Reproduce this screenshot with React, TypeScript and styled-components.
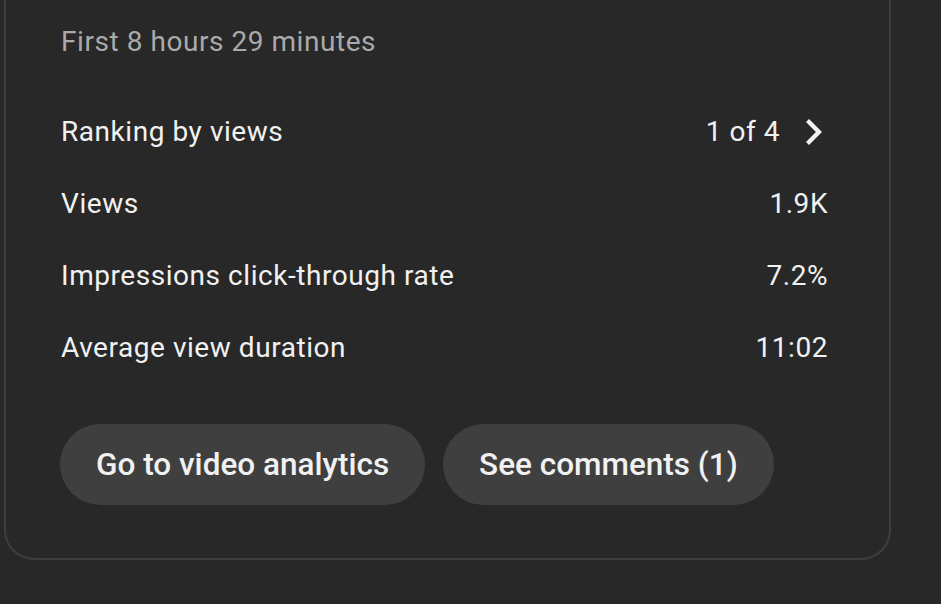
import styled, { createGlobalStyle } from "styled-components"

const Global = createGlobalStyle`
    html, body {
        margin: 0;
        padding: 0;
        background: #282828;
    }
    body {
        font-family: Roboto, "Noto Sans", "Liberation Sans", sans-serif;
        color: #f1f1f1;
    }
`

const Card = styled.section`
    box-sizing: border-box;
    width: 887px;
    margin-left: 4px;
    padding: 22px 61px 53px 55px;
    border: 2px solid #3e3e3e;
    border-top: none;
    border-radius: 0 0 30px 30px;
    background: #282828;
`

const Period = styled.div`
    font-size: 28px;
    line-height: 40px;
    letter-spacing: 0.55px;
    color: #aaaaaa;
    margin-bottom: 34px;
`

const Row = styled.div`
    display: flex;
    align-items: center;
    justify-content: space-between;
    height: 72px;
    font-size: 28px;
    line-height: 72px;
    letter-spacing: 0.55px;
    color: #f1f1f1;
`

const Value = styled.div`
    display: flex;
    align-items: center;
`

const Chevron = styled.svg`
    width: 16px;
    height: 26px;
    margin-left: 26px;
    margin-right: 6px;
    fill: #f1f1f1;
`

const Actions = styled.div`
    display: flex;
    gap: 18px;
    margin: 40px 0 0 -1px;
`

const Button = styled.button`
    height: 81px;
    padding: 0 36px;
    border: none;
    border-radius: 41px;
    background: #3f3f3f;
    color: #f1f1f1;
    font-family: Roboto, "Noto Sans", "Liberation Sans", sans-serif;
    font-size: 31.5px;
    font-weight: 500;
    cursor: pointer;
`

const stats = [
    { label: "Views", value: "1.9K" },
    { label: "Impressions click-through rate", value: "7.2%" },
    { label: "Average view duration", value: "11:02" },
]

export default function App() {
    return (
        <>
            <Global />
            <Card>
                <Period>First 8 hours 29 minutes</Period>
                <Row>
                    <span>Ranking by views</span>
                    <Value>
                        1 of 4
                        <Chevron viewBox="8.59 6 7.41 12">
                            <path d="M10 6L8.59 7.41 13.17 12l-4.58 4.59L10 18l6-6z" />
                        </Chevron>
                    </Value>
                </Row>
                {stats.map(s => (
                    <Row key={s.label}>
                        <span>{s.label}</span>
                        <Value>{s.value}</Value>
                    </Row>
                ))}
                <Actions>
                    <Button>Go to video analytics</Button>
                    <Button>See comments (1)</Button>
                </Actions>
            </Card>
        </>
    )
}
